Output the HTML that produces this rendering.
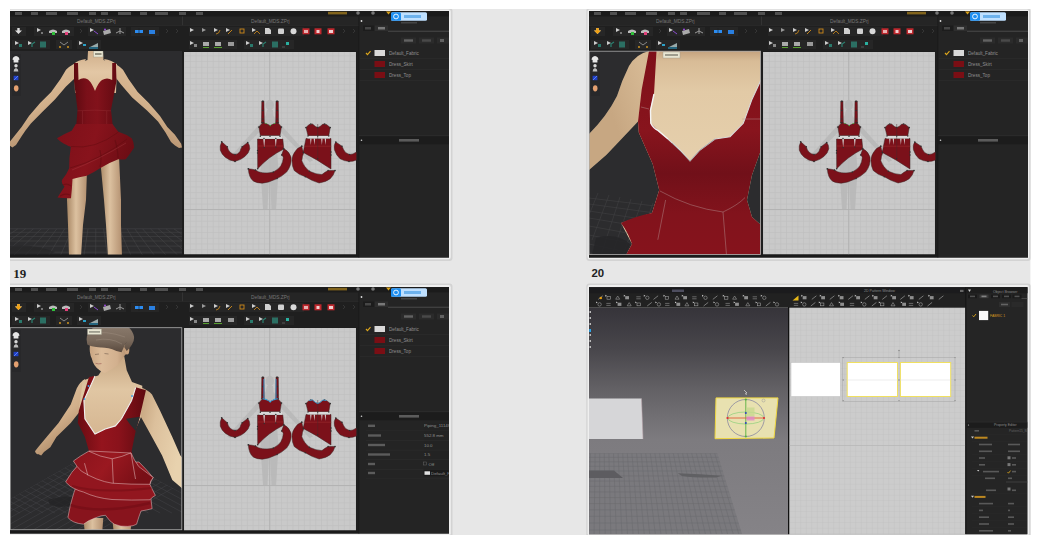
<!DOCTYPE html>
<html><head><meta charset="utf-8">
<style>
html,body{margin:0;padding:0;background:#fff;width:1041px;height:541px;overflow:hidden}
svg{display:block}
</style></head><body>
<svg width="1041" height="541" viewBox="0 0 1041 541" style='font-family:"Liberation Sans",sans-serif'>
<defs>
  <pattern id="grid" x="189.9" y="61.1" width="5.7" height="5.7" patternUnits="userSpaceOnUse">
    <rect width="5.7" height="5.7" fill="#c9c9c9"/>
    <path d="M0 0.35H5.7M0.35 0V5.7" stroke="#bdbdbd" stroke-width="0.7"/>
  </pattern>
  <linearGradient id="skinV" x1="0" y1="0" x2="1" y2="0">
    <stop offset="0" stop-color="#b89572"/><stop offset="0.5" stop-color="#e2c19c"/><stop offset="1" stop-color="#b89572"/>
  </linearGradient>
  <linearGradient id="redV" x1="0" y1="0" x2="1" y2="0">
    <stop offset="0" stop-color="#6e0c12"/><stop offset="0.45" stop-color="#9a141c"/><stop offset="1" stop-color="#6e0c12"/>
  </linearGradient>


  <linearGradient id="legG" x1="0" y1="0" x2="1" y2="0">
    <stop offset="0" stop-color="#a98865"/><stop offset="0.45" stop-color="#dcc1a0"/><stop offset="1" stop-color="#b39070"/>
  </linearGradient>
  <linearGradient id="armL" x1="0" y1="0" x2="0.5" y2="1">
    <stop offset="0" stop-color="#e6c9a6"/><stop offset="0.6" stop-color="#d2b08b"/><stop offset="1" stop-color="#a88462"/>
  </linearGradient>
  <linearGradient id="armR" x1="1" y1="0" x2="0.5" y2="1">
    <stop offset="0" stop-color="#e6c9a6"/><stop offset="0.6" stop-color="#d2b08b"/><stop offset="1" stop-color="#a88462"/>
  </linearGradient>
  <linearGradient id="chestG" x1="0" y1="0" x2="0" y2="1">
    <stop offset="0" stop-color="#cfae8a"/><stop offset="0.5" stop-color="#e3c7a5"/><stop offset="1" stop-color="#d8b994"/>
  </linearGradient>
  <linearGradient id="redBod" x1="0" y1="0" x2="1" y2="0">
    <stop offset="0" stop-color="#5e0a10"/><stop offset="0.3" stop-color="#7a1019"/><stop offset="0.55" stop-color="#82121b"/><stop offset="1" stop-color="#640b12"/>
  </linearGradient>
  <linearGradient id="redSk" x1="0" y1="0" x2="1" y2="0.3">
    <stop offset="0" stop-color="#7c1019"/><stop offset="0.5" stop-color="#88131c"/><stop offset="1" stop-color="#6c0d14"/>
  </linearGradient>
  <clipPath id="clipTL3d"><rect x="10" y="51" width="172" height="203.5"/></clipPath>

  <clipPath id="clipTR3d"><rect x="589" y="51" width="171.5" height="203.5"/></clipPath>
  <linearGradient id="armTR" x1="0" y1="0" x2="1" y2="-0.6">
    <stop offset="0" stop-color="#c7a782"/><stop offset="0.5" stop-color="#d6b994"/><stop offset="1" stop-color="#cdae88"/>
  </linearGradient>
  <clipPath id="clipTRfloor"><path d="M589 190L660 200L650 255H589Z"/></clipPath>
  <linearGradient id="skinTR" x1="0" y1="0" x2="0" y2="1">
    <stop offset="0" stop-color="#c4a27e"/><stop offset="0.05" stop-color="#d8bc97"/><stop offset="0.2" stop-color="#e2caa6"/><stop offset="0.6" stop-color="#e6d0ad"/><stop offset="1" stop-color="#e0c6a2"/>
  </linearGradient>
  <linearGradient id="redTR" x1="0" y1="0" x2="0" y2="1">
    <stop offset="0" stop-color="#7e1019"/><stop offset="0.39" stop-color="#88141d"/><stop offset="0.6" stop-color="#711019"/><stop offset="0.8" stop-color="#82131c"/><stop offset="1" stop-color="#86131c"/>
  </linearGradient>

  <clipPath id="clipBL3d"><rect x="10" y="327.5" width="172" height="202.5"/></clipPath>
  <clipPath id="clipBLfloor"><path d="M10 499L98.7 448.2L182 493V530H10Z"/></clipPath>
  <linearGradient id="armBLR" x1="0" y1="0" x2="1" y2="0.4">
    <stop offset="0" stop-color="#b8956f"/><stop offset="0.5" stop-color="#dcc09c"/><stop offset="1" stop-color="#e8d2ae"/>
  </linearGradient>
  <linearGradient id="chestBL" x1="0" y1="0" x2="0" y2="1">
    <stop offset="0" stop-color="#c7a682"/><stop offset="0.4" stop-color="#e0c6a3"/><stop offset="1" stop-color="#d4b48f"/>
  </linearGradient>
  <linearGradient id="faceG" x1="0" y1="0" x2="1" y2="0">
    <stop offset="0" stop-color="#c9a582"/><stop offset="0.3" stop-color="#dcbc9a"/><stop offset="0.7" stop-color="#d2b08e"/><stop offset="1" stop-color="#ae8a6a"/>
  </linearGradient>
  <linearGradient id="hairG" x1="0" y1="0" x2="0" y2="1">
    <stop offset="0" stop-color="#8e7e70"/><stop offset="0.6" stop-color="#7a6a5c"/><stop offset="1" stop-color="#5a4a3e"/>
  </linearGradient>

  <clipPath id="clipBRfloor"><path d="M589 453.2H717.3L742 534H589Z"/></clipPath>
  <linearGradient id="brGrad" x1="0" y1="0" x2="0" y2="1">
    <stop offset="0" stop-color="#36343a"/><stop offset="0.18" stop-color="#48464b"/><stop offset="0.36" stop-color="#636165"/><stop offset="0.58" stop-color="#7d7b7f"/><stop offset="1" stop-color="#858387"/>
  </linearGradient>
  <pattern id="gridBR" x="789.3" y="307.7" width="5.5" height="5.5" patternUnits="userSpaceOnUse">
    <rect width="5.5" height="5.5" fill="#cccccc"/>
    <path d="M0 0.25H5.5M0.25 0V5.5" stroke="#c0c0c0" stroke-width="0.5"/>
  </pattern>
  <g id="icons3d">
    <rect x="12" y="54" width="9" height="42" fill="#262628" opacity="0.6"/>
    <path d="M13.2 57.5q1.2-1.6 2.8-1.6t2.8 1.6l0.8 2-1.2 0.4v2.6h-4.8v-2.6l-1.2-0.4z" fill="#e6e6e6"/>
    <circle cx="16" cy="65.8" r="1.7" fill="#d8d8d8"/><path d="M13.6 71.5q0-3 2.4-3.6q2.4 0.6 2.4 3.6z" fill="#bdbdbd"/>
    <rect x="13.6" y="75.8" width="4.8" height="4.4" fill="#1f3fc8"/><path d="M14 80l4-4" stroke="#8ab0ff" stroke-width="0.6"/>
    <ellipse cx="16.2" cy="88.3" rx="2.3" ry="3.1" fill="#e4a070"/>
  </g>
  <clipPath id="clipBLpanel"><rect x="360" y="400" width="88.8" height="100"/></clipPath>
  <clipPath id="clipBRpanel"><rect x="966" y="280" width="61" height="260"/></clipPath>
  <linearGradient id="redBodBL" x1="0" y1="0" x2="1" y2="0">
    <stop offset="0" stop-color="#6a0c12"/><stop offset="0.35" stop-color="#94141d"/><stop offset="0.6" stop-color="#8a121b"/><stop offset="1" stop-color="#5e0a10"/>
  </linearGradient>
  <linearGradient id="redSkBL" x1="0" y1="0" x2="1" y2="0.3">
    <stop offset="0" stop-color="#8a131c"/><stop offset="0.5" stop-color="#9a1820"/><stop offset="1" stop-color="#780f16"/>
  </linearGradient>
  <!-- shared UI chrome (TL coordinates) -->
  <g id="chrome">
    <rect x="10" y="11" width="439" height="246.5" fill="#1e1e1e"/>
    <rect x="10" y="11" width="439" height="5.5" fill="#1b1b1b"/>
    <g fill="#9a9a9a" opacity="0.42">
      <rect x="15" y="12" width="7" height="3"/><rect x="31" y="12" width="7" height="3"/>
      <rect x="46" y="12" width="11" height="3"/><rect x="67" y="12" width="11" height="3"/>
      <rect x="89" y="12" width="7" height="3"/><rect x="101" y="12" width="7" height="3"/>
      <rect x="118" y="12" width="13" height="3"/><rect x="140" y="12" width="7" height="3"/>
      <rect x="155" y="12" width="13" height="3"/><rect x="179" y="12" width="7" height="3"/>
      <rect x="196" y="12" width="7" height="3"/>
    </g>
    <rect x="328" y="11.8" width="19" height="2.6" fill="#c8961e" opacity="0.6"/>
    <circle cx="358" cy="13" r="1.8" fill="#777"/><circle cx="373" cy="13" r="1.8" fill="#777"/>
    <path d="M386 11.5h5l-2.5 3z" fill="#d9a21c"/>
    <!-- title bar -->
    <rect x="10" y="16.5" width="349" height="9" fill="#252525"/>
    <rect x="10" y="25.2" width="349" height="0.6" fill="#333"/>
    <text x="77" y="22.6" font-size="4.8" fill="#8a8a8a" opacity="0.8">Default_MDS.ZPrj</text>
    <text x="251" y="22.6" font-size="4.8" fill="#8a8a8a" opacity="0.8">Default_MDS.ZPrj</text>
    <rect x="182" y="16.5" width="1" height="9" fill="#333"/>
    <!-- toolbars bg -->
    <rect x="10" y="25.8" width="349" height="25.5" fill="#1f1f1f"/>
    <!-- 3D viewport -->
    <rect x="10" y="51" width="172" height="203.5" fill="#2c2c2e"/>
    <!-- 2D window -->
    <rect x="184" y="52" width="172" height="202.5" fill="url(#grid)"/>
    <rect x="269.3" y="52" width="0.8" height="202.5" fill="#b0b0b0"/>
    <rect x="184" y="209" width="172" height="0.8" fill="#b0b0b0"/>
    <!-- status bar -->
    <rect x="10" y="254.5" width="349" height="3" fill="#1a1a1a"/>
    <!-- right panel -->
    <rect x="359" y="16.5" width="90" height="241" fill="#242424"/>
    <rect x="358.5" y="16.5" width="0.8" height="241" fill="#181818"/>
    <circle cx="361.5" cy="21" r="0.9" fill="#ddd"/>
    <rect x="363" y="25.5" width="11" height="5.5" fill="#1c1c1c"/>
    <rect x="375" y="25.5" width="13" height="5.5" fill="#2e2e2e"/>
    <rect x="378" y="27" width="7" height="2.5" fill="#aaa" opacity="0.6"/>
    <rect x="365" y="27" width="6" height="2.5" fill="#888" opacity="0.4"/>
    <rect x="388" y="30.8" width="61" height="0.7" fill="#5a5a5a"/>
    <rect x="401" y="37.5" width="15" height="6" fill="#2b2b2b"/>
    <rect x="419" y="37.5" width="15" height="6" fill="#2b2b2b"/>
    <rect x="437" y="37.5" width="12" height="6" fill="#2b2b2b"/>
    <rect x="404" y="39.3" width="9" height="2.4" fill="#999" opacity="0.5"/>
    <rect x="422" y="39.3" width="9" height="2.4" fill="#777" opacity="0.4"/>
    <rect x="440" y="39" width="4" height="3" fill="#999" opacity="0.5"/>
    <!-- fabric rows -->
    <path d="M366 53l1.5 1.6 3-3.4" stroke="#e0a81c" stroke-width="1.1" fill="none"/>
    <rect x="374.5" y="50" width="10.5" height="6" fill="#d9d9d9"/>
    <text x="389" y="55" font-size="4.6" fill="#a8a8a8" opacity="0.8">Default_Fabric</text>
    <rect x="374.5" y="61" width="10.5" height="6" fill="#7a0e14"/>
    <text x="389" y="66" font-size="4.6" fill="#a8a8a8" opacity="0.8">Dress_Skirt</text>
    <rect x="374.5" y="72" width="10.5" height="6" fill="#7a0e14"/>
    <text x="389" y="77" font-size="4.6" fill="#a8a8a8" opacity="0.8">Dress_Top</text>
    <rect x="360" y="58.5" width="89" height="0.5" fill="#2e2e2e"/>
    <rect x="360" y="69.5" width="89" height="0.5" fill="#2e2e2e"/>
    <rect x="360" y="80.5" width="89" height="0.5" fill="#2e2e2e"/>
    <!-- property editor header -->
    <rect x="359" y="135.5" width="90" height="0.8" fill="#303030"/>
    <rect x="359" y="136.3" width="90" height="8" fill="#1c1c1c"/>
    <circle cx="361.5" cy="140.3" r="0.8" fill="#ccc"/>
    <rect x="399" y="139" width="20" height="2.6" fill="#999" opacity="0.5"/>
    <!-- upload button -->
    <rect x="391" y="12.3" width="36" height="8.4" rx="1.5" fill="#bfe0ff"/>
    <rect x="391" y="12.3" width="10" height="8.4" rx="1.5" fill="#1f8ff0"/>
    <circle cx="396" cy="16.5" r="2.4" fill="none" stroke="#fff" stroke-width="0.9"/>
    <rect x="404" y="15" width="17" height="3" fill="#4a9ee6" opacity="0.7"/>
    <rect x="401" y="22" width="16" height="1.5" fill="#666" opacity="0.5"/>
    <!-- toolbar icons row1 -->
    <g id="tb1">
      <rect x="12" y="27" width="14" height="9" fill="#262626"/>
      <path d="M17.3 28h2.4v2.4h2.3l-3.5 3.6-3.5-3.6h2.3z" fill="#dcdcdc"/>
      <rect x="34" y="27" width="40" height="9" fill="#262626"/>
      <path d="M37 28l4 2-4 2z" fill="#ccc"/><rect x="41" y="32" width="2" height="2" fill="#777"/>
      <path d="M49 31q4-3 8 0v2h-8z" fill="#bbb"/><rect x="52" y="32" width="3" height="3" fill="#2fbf3a"/>
      <path d="M62 31q4-3 8 0v2h-8z" fill="#bbb"/><rect x="65" y="32" width="3" height="3" fill="#e0407a"/>
      <path d="M80 29l2 2-2 2" stroke="#444" stroke-width="0.6" fill="none"/>
      <rect x="88" y="27" width="38" height="9" fill="#262626"/>
      <path d="M90 28l4 2-4 2z" fill="#ccc"/><path d="M94 31l4 3" stroke="#8a4bd0" stroke-width="1"/>
      <path d="M103 31l7-2 1 4-7 2z" fill="#aaa"/><circle cx="105" cy="29.5" r="1" fill="#9b4be0"/>
      <path d="M120 28v6M116 33l4-2 4 2" stroke="#999" stroke-width="1" fill="none"/>
      <rect x="131" y="27" width="28" height="9" fill="#262626"/>
      <path d="M135 30h8v3h-8z" fill="#2c8cf0"/><path d="M139 28v7" stroke="#1e1e1e" stroke-width="0.6"/>
      <rect x="149" y="30" width="6" height="4" fill="#2a7fe0"/>
      <path d="M166 29l2 2-2 2M176 29l2 2-2 2" stroke="#444" stroke-width="0.6" fill="none"/>
    </g>
    <g id="tb2">
      <rect x="12" y="40" width="38" height="9" fill="#262626"/>
      <path d="M15 41l4 2-4 2z" fill="#ccc"/><rect x="19" y="44" width="3" height="3" fill="#2a7a6c"/>
      <path d="M28 41l4 2-4 2z" fill="#ccc"/><path d="M32 47v-3l3-2" stroke="#2a8070" stroke-width="1.2" fill="none"/>
      <rect x="40" y="41.5" width="6" height="6" fill="#2b6f63"/>
      <rect x="56" y="40" width="16" height="9" fill="#262626"/>
      <path d="M60 42l4 3 4-3" stroke="#888" stroke-width="1" fill="none"/><circle cx="60" cy="47" r="0.9" fill="#e0a020"/><circle cx="68" cy="47" r="0.9" fill="#e0a020"/>
      <rect x="77" y="40" width="24" height="9" fill="#262626"/>
      <path d="M79 41l4 2-4 2z" fill="#ccc"/><rect x="83" y="44" width="3" height="2" fill="#2aa0c8"/>
      <path d="M90 47l8-4v4z" fill="#9aa"/><path d="M89 48h9" stroke="#27a7d8" stroke-width="1"/>
    </g>
    <!-- 2D toolbar icons -->
    <g>
      <rect x="189" y="27" width="115" height="9" fill="#262626"/>
      <path d="M190 28l4 2-4 2z" fill="#ccc"/>
      <path d="M202 28l4 2-4 2z" fill="#999"/>
      <path d="M214 28l4 2-4 2z" fill="#ccc"/><path d="M216 34q3 0 4-4" stroke="#d08a1a" stroke-width="0.8" fill="none"/>
      <path d="M226 28l4 2-4 2z" fill="#ccc"/><path d="M228 34l4-4" stroke="#d08a1a" stroke-width="0.9" fill="none"/>
      <rect x="240" y="29" width="4" height="4" fill="none" stroke="#d08a1a" stroke-width="0.9"/>
      <path d="M252 28l4 2-4 2z" fill="#ccc"/><path d="M254 34l3-3 3 3" stroke="#d08a1a" stroke-width="0.8" fill="none"/>
      <path d="M265 28h4l2 2v4h-6z" fill="#cfcfcf"/>
      <rect x="278" y="28.5" width="6" height="5.5" rx="1" fill="#d0d0d0"/>
      <circle cx="293.5" cy="31.3" r="3" fill="#d8d8d8"/>
      <rect x="302.5" y="28.3" width="7" height="6" fill="#c0282e"/><rect x="304" y="30" width="4" height="3" fill="#e8b0b0"/>
      <rect x="314.5" y="28.3" width="7" height="6" fill="#c0282e"/><rect x="316.5" y="30" width="3" height="3" fill="#f0d0d0"/>
      <rect x="327.5" y="28.3" width="7" height="6" fill="#c0282e"/><rect x="329" y="30" width="4" height="3" fill="#f0d0d0"/>
      <path d="M343 29l2 2-2 2M353 29l2 2-2 2" stroke="#444" stroke-width="0.6" fill="none"/>
      <rect x="189" y="40" width="48" height="9" fill="#262626"/>
      <path d="M190 41l4 2-4 2z" fill="#ccc"/><rect x="194" y="44" width="3" height="3" fill="#888"/>
      <rect x="203" y="42" width="6" height="4" fill="#aaa"/><path d="M203 47.5h6" stroke="#5cb030" stroke-width="0.9"/>
      <rect x="215" y="42" width="6" height="4" fill="#aaa"/><path d="M214 47.5h8" stroke="#5cb030" stroke-width="0.9"/>
      <rect x="228" y="42" width="6" height="4" fill="#999"/>
      <rect x="244" y="40" width="50" height="9" fill="#262626"/>
      <path d="M246 41l4 2-4 2z" fill="#ccc"/><rect x="250" y="44" width="3" height="3" fill="#2a7a6c"/>
      <path d="M259 41l4 2-4 2z" fill="#ccc"/><path d="M263 47v-3l3-2" stroke="#2a8070" stroke-width="1.2" fill="none"/>
      <rect x="272" y="41.5" width="6" height="6" fill="#2b6f63"/>
      <rect x="286" y="42" width="3" height="3" fill="#2ab0a0"/><path d="M282 47h3" stroke="#777" stroke-width="0.6"/>
    </g>
    <use href="#icons3d"/>
  </g>

  <!-- 2D pattern pieces (TL coordinates) -->
  <g id="pieces">
    <g fill="#b9b9b9" opacity="0.9">
      <ellipse cx="269.8" cy="105" rx="4.2" ry="5.2"/>
      <path d="M267 110h6l0.5 6 4.5 6 1 14-2 14 1.5 20-0.5 8-2 31h-4.5l-1.5-30-0.5-8-0.5 8-1.5 30h-4.5l-2-31-0.5-8 1.5-20-2-14 1-14 4.5-6z"/>
      <path d="M261.5 122L227 160.5L230.5 162L263 128ZM278.5 122L313 160.5L309.5 162L277 128Z"/>
    </g>
    <g fill="#7b111a" stroke="#3a2222" stroke-width="0.5">
      <path d="M261.8 101H263.9L264.3 123H261.4Z"/>
      <path d="M276 101H278.3L278.6 123H275.7Z"/>
      <path d="M258.9 127L262.5 122.8L266 123.5L270.2 125.6L274.4 123.5L277.9 122.8L281.4 127L280 135.6H260.3Z"/>
      <path d="M257.5 139H282.8L283.8 149Q268 157 257.7 168.8Z"/>
      <path d="M283.8 148.8Q289 151 291 157Q292 165 286.6 172.1Q281 177 276.6 178.8Q268 183 262.2 183.2Q256 183 253.3 181Q249 178 248.3 168.8Q252 169 255.5 170Q258 172 262.2 172.7Q268 173.5 273.3 172.1Q279 169 281 165.5Q283 162 283.3 157.7Q283 156 281.6 155Z"/>
      <path d="M221.7 141.8Q219.5 146 220.3 150.2Q222 155 225.2 157.2Q230 161 235 161.4Q241 160 244.9 156.5Q249 153 249.8 148.8Q250 145 247.7 142.5L242.1 146.7Q240.5 149 240 151.6Q238 154.4 235 154.4Q232 154 230.2 152.3Q228 150 227.3 146.7Z"/>
      <path d="M306 127.5L309 124.5L312.5 124L315.5 126.5L317.7 127.5L320 126.5L323 124L326.5 124.5L330.2 127.5L328.8 135.8H308Z"/>
      <path d="M306 138.5H331L331 169Q318 160 303.2 152.4Z"/>
      <path d="M301.8 146.2Q297 148 295.5 151Q292 155 292 160.8Q292 166 294.2 170.5Q299 175 305.3 176.7Q312 181 319.1 183Q326 182 330.2 178.8Q334 175 335 170.5H328.1Q325 172 321.9 174.6Q315 174 309.4 171.2Q304 167 301.8 160.8Q302 156 303.9 152.4L302.5 149.7Z"/>
      <path d="M335.8 142Q333.5 145 334.4 149.7Q336 155 340 158.7Q344 161 349 161.5Q353 161.5 356.5 160V152Q353 154.5 349.6 154.5Q347 153.5 345.5 152.4Q343.5 150 342 146.2Z"/>
    </g>
    <g fill="#d9d9d9">
      <rect x="259.5" y="136" width="22.5" height="2.8"/>
      <rect x="307.5" y="136" width="22.5" height="2.5"/>
      <path d="M263.3 139H264.9L264.2 148ZM275 139H276.6L275.8 147.5Z"/>
      <path d="M310.2 138.5H311.5L310.8 145ZM313.7 138.5H315L314.3 145ZM321.2 138.5H322.5L321.9 145ZM324.7 138.5H326L325.4 145Z"/>
    </g>
    <path d="M257.5 146H283.5M303.5 146.2H331.5" stroke="#b03a3a" stroke-width="0.5" opacity="0.8"/>
    <path d="M317.7 124V158.7" stroke="#4a2a2a" stroke-width="0.45"/>
    <g fill="#2f2f2f">
      <circle cx="262.8" cy="101.3" r="0.85"/><circle cx="277.1" cy="101.3" r="0.85"/>
      <circle cx="262.8" cy="110.5" r="0.75"/><circle cx="277.1" cy="110.5" r="0.75"/>
      <circle cx="262.8" cy="119" r="0.75"/><circle cx="277.1" cy="119" r="0.75"/>
      <circle cx="258.9" cy="127" r="0.85"/><circle cx="281.4" cy="127" r="0.85"/>
      <circle cx="262.5" cy="122.8" r="0.75"/><circle cx="277.9" cy="122.8" r="0.75"/>
      <circle cx="260.3" cy="136.2" r="0.75"/><circle cx="264" cy="138.5" r="0.75"/><circle cx="270" cy="136.2" r="0.75"/><circle cx="275.8" cy="138.5" r="0.75"/><circle cx="280" cy="136.2" r="0.75"/>
      <circle cx="264.2" cy="147.5" r="0.7"/><circle cx="275.8" cy="147" r="0.7"/>
      <circle cx="257.5" cy="150.5" r="0.7"/><circle cx="257.5" cy="153" r="0.7"/>
      <circle cx="248.3" cy="168.8" r="0.85"/><circle cx="255.5" cy="170" r="0.75"/><circle cx="257.7" cy="168.8" r="0.75"/>
      <circle cx="273.3" cy="172.1" r="0.75"/><circle cx="277" cy="178.5" r="0.75"/><circle cx="283.8" cy="148.8" r="0.85"/><circle cx="281.6" cy="155" r="0.75"/>
      <circle cx="221.7" cy="141.8" r="0.85"/><circle cx="247.7" cy="142.5" r="0.85"/><circle cx="235" cy="161.4" r="0.8"/>
      <circle cx="242.1" cy="146.7" r="0.75"/><circle cx="227.3" cy="146.7" r="0.75"/><circle cx="235" cy="154.4" r="0.75"/>
      <circle cx="306" cy="127.5" r="0.85"/><circle cx="330.2" cy="127.5" r="0.85"/>
      <circle cx="310.8" cy="124" r="0.75"/><circle cx="324.7" cy="124" r="0.75"/><circle cx="317.7" cy="127.5" r="0.7"/>
      <circle cx="308" cy="136" r="0.7"/><circle cx="317.7" cy="136" r="0.7"/><circle cx="328.8" cy="136" r="0.7"/>
      <circle cx="303.2" cy="152.4" r="0.75"/><circle cx="317.7" cy="158.7" r="0.75"/><circle cx="331" cy="152" r="0.7"/><circle cx="331" cy="155" r="0.7"/>
      <circle cx="301.8" cy="146.2" r="0.85"/><circle cx="335" cy="170.5" r="0.85"/><circle cx="328.1" cy="170.5" r="0.75"/>
      <circle cx="309.4" cy="171.2" r="0.75"/><circle cx="305.3" cy="176.7" r="0.75"/>
      <circle cx="335.8" cy="142" r="0.85"/><circle cx="342" cy="146.2" r="0.75"/><circle cx="349" cy="161.5" r="0.8"/><circle cx="349.6" cy="154.5" r="0.75"/>
    </g>
    <g fill="#3cc83c"><circle cx="266" cy="123.5" r="0.6"/><circle cx="270.2" cy="125.6" r="0.7"/><circle cx="274.4" cy="123.5" r="0.6"/></g>
  </g>
</defs>

<!-- page background -->
<rect x="10" y="9" width="1020.5" height="526" fill="#e7e7e7"/>

<!-- frames -->
<g>
  <rect x="7" y="8" width="445.5" height="253" rx="3" fill="#d3d3d3"/>
  <rect x="8.5" y="9.5" width="442.3" height="249.8" rx="2.2" fill="#efefef"/>
  <rect x="586.3" y="8" width="444.5" height="253" rx="3" fill="#d3d3d3"/>
  <rect x="587.6" y="9.5" width="441.5" height="249.8" rx="2.2" fill="#efefef"/>
  <rect x="7" y="283.6" width="445.5" height="254" rx="3" fill="#d3d3d3"/>
  <rect x="8.5" y="285.1" width="442.3" height="250.3" rx="2.2" fill="#efefef"/>
  <rect x="586.3" y="283.6" width="444.5" height="254" rx="3" fill="#d3d3d3"/>
  <rect x="587.6" y="285.1" width="441.5" height="250.3" rx="2.2" fill="#efefef"/>
</g>
<!-- TL -->
<use href="#chrome"/>
<use href="#pieces"/>

<!-- TL figure -->
<g id="figTL" clip-path="url(#clipTL3d)">
  <!-- floor grid -->
  <g stroke="#48484b" stroke-width="0.5" fill="none"><path d="M10 228.8H182M10 232.3H182M10 236.6H182M10 241H182M10 246.1H182M10 252.2H182M-5.6 228.8L-56.4 255M2.2 228.8L-44.7 255M10.0 228.8L-33.0 255M17.8 228.8L-21.3 255M25.6 228.8L-9.6 255M33.4 228.8L2.1 255M41.2 228.8L13.8 255M49.0 228.8L25.5 255M56.8 228.8L37.2 255M64.6 228.8L48.9 255M72.4 228.8L60.6 255M80.2 228.8L72.3 255M88.0 228.8L84.0 255M95.8 228.8L95.7 255M103.6 228.8L107.4 255M111.4 228.8L119.1 255M119.2 228.8L130.8 255M127.0 228.8L142.5 255M134.8 228.8L154.2 255M142.6 228.8L165.9 255M150.4 228.8L177.6 255M158.2 228.8L189.3 255M166.0 228.8L201.0 255M173.8 228.8L212.7 255M181.6 228.8L224.4 255M189.4 228.8L236.1 255M197.2 228.8L247.8 255"/></g>
  <path d="M10 246Q30 243 55 252L50 254.5H10Z" fill="#262628" opacity="0.7"/>
  <!-- legs -->
  <path d="M68 172L87 170L86 200L83 225L81 257H69L68 225L67 200Z" fill="url(#legG)"/>
  <path d="M100 158L119 156L121 200L121 225L122 257H108L106 225L104 200Z" fill="url(#legG)"/>
  <!-- arms -->
  <path d="M86 59Q78 60 73.4 64.2Q69 66.5 66 69.8L60.5 79L51.2 92L40.1 103L29 116L21.6 127L14.2 136.3L9.6 141.9L9.6 145.6L12.4 147.4L16 145L21.6 136.3L25.3 130.8L30.9 123.4L42 112.3L54.9 99.4L66 86.4L74 79Z" fill="url(#armL)"/>
  <path d="M104 59Q112 60 117.4 65.2Q120.5 67 123 69.8L128.5 79L137.7 92L148.8 103L160 116L167.3 127L174.7 134.5L181.2 143.7L182 147.4L179 148L175 145.5L171 142L165.5 132.6L158 121.5L147 110.5L132.2 97.5L121 84.6L116 78Z" fill="url(#armR)"/>
  <!-- neck & chest -->
  <path d="M88 51H103L103.5 60Q110 62 117 64L116 93H75L74 64Q81 62 87.5 60Z" fill="url(#chestG)"/>
  <!-- bodice -->
  <path d="M74 63H78L78.5 80Q83 77 88 79.5Q92 83 95 91Q98 83 102 80Q107 77 112.2 80L112.2 63H116L116.5 81L111 110L113 128H76L77.5 110L74 81Z" fill="url(#redBod)"/>
  <path d="M77.5 110.8Q95 109.5 111 110.8M82.5 111V130M106.7 111V130" stroke="#b04a50" stroke-width="0.4" fill="none" opacity="0.55"/>
  <!-- skirt -->
  <path d="M75.8 124L112.5 124Q116 129 118.3 131.7Q126 134 131.7 138.3Q134 142 134.2 147.5Q130 154 125.8 159.2Q122 160 118.3 159.2Q108 163 100 168.3Q93 173 86.7 175.8Q79 177 72.5 179Q72 189 71 198.3Q64 198.5 57.5 197.5Q61 192 64.5 186.7Q61 183 62 180Q67 174 69.2 168.3Q69 158 70.8 146.7Q68 146 66.7 145Q60 142 57 138.3Q64 134 71.7 130.8Z" fill="url(#redSk)"/>
  <path d="M71 146.5Q95 150 118.5 132M70 168Q100 160 127 139" stroke="#5f0a0f" stroke-width="0.8" fill="none" opacity="0.6"/><path d="M63 185Q67 183 71 186M60 196Q65 193 70 195M100 150Q102 160 100 167M115 140Q118 150 118 158" stroke="#5a0a0f" stroke-width="1.2" fill="none" opacity="0.45"/>
  <path d="M72 170Q98 160 126 143" stroke="#c05a5e" stroke-width="0.4" fill="none" opacity="0.6"/>
  <!-- tag -->
  <rect x="93.6" y="51" width="9.4" height="6" fill="#e9e6d2" stroke="#9a9a8a" stroke-width="0.4"/>
  <rect x="95" y="53" width="6.5" height="2" fill="#6d6d60" opacity="0.7"/>
</g>
<!-- TR -->
<use href="#chrome" x="579"/>
<use href="#pieces" x="579"/>

<!-- TR figure -->
<g clip-path="url(#clipTR3d)">
  <rect x="589" y="51" width="172" height="204" fill="url(#skinTR)"/>
  <!-- arm shading -->
  <path d="M589 134Q607 116 617 96Q622 80 629 66Q636 54 649 51H660L641.6 90L638 121.4L625 135.3L606.5 154.7L589 170Z" fill="url(#armTR)"/>
  <path d="M589 51H649Q636 54 629 66Q622 80 617 96Q607 116 589 134Z" fill="#2c2c2e"/>
  <path d="M589 170L606.5 154.7L625 135.3L638 121.4L638.8 132.5L645.3 147.3L652.7 164L659.2 190L652 213L621 223L632 244L626 255H589Z" fill="#2c2c2e"/>
  <!-- floor grid -->
  <g stroke="#444447" stroke-width="0.5" fill="none" clip-path="url(#clipTRfloor)">
    <path d="M589 198L655 206M589 204L655 213M589 211L655 221M589 218L655 229M589 226L655 238M589 235L655 248M589 244L655 258M589 253L640 260"/>
    <path d="M598 193L589 215M609 195L592 240M620 197L600 258M631 199L611 258M642 201L622 258M653 203L634 258"/>
  </g>
  <path d="M596 238Q616 232 630 244L626 255H592Z" fill="#262628" opacity="0.9"/>
  <!-- dress -->
  <path d="M649 51H656.5L654 94L650 110.3L650.8 123.3L658.2 130.7L668 139L680 150L690 161L700 150L715 139L730 136.7L743.3 123.3L751.7 100L761 80V150L752 175L747 200L752 217L761 225V255H626L632 244Q628 232 621 223Q636 216 652 213L659.2 190L652.7 164L645.3 147.3L638.8 132.5L638 121.4L641.6 90Z" fill="url(#redTR)"/>
  <path d="M761 150L752 175L747 200L752 217L761 225Z" fill="#2c2c2e"/>
  <!-- piping -->
  <path d="M654 94L650.5 110.3L650.8 123.3Q653 128 658.2 130.7L668 139" stroke="#f4f4f4" stroke-width="1.4" fill="none"/>
  <path d="M668 139L680 150L690 161L700 150L715 139L730 136.7L743.3 123.3L751.7 100L761 80" stroke="#d8d8d8" stroke-width="1.1" fill="none"/>
  <path d="M672 143L690 161L700 150L715 139" stroke="#777" stroke-width="0.7" fill="none" opacity="0.7"/>
  <!-- seams -->
  <path d="M660 191Q690 208 723 212Q738 205 745 197.6M665.6 200L657.8 239.8M723 212L726.5 255M641 107L649 109M742 119H761" stroke="#b89a9a" stroke-width="0.55" fill="none" opacity="0.8"/>
  <!-- tag -->
  <rect x="663" y="52" width="17" height="6" fill="#e9e6d2" stroke="#9a9a8a" stroke-width="0.4"/>
  <rect x="665" y="54" width="13" height="2" fill="#6d6d60" opacity="0.6"/>
</g>
<rect x="589.2" y="51.2" width="171.3" height="203.3" fill="none" stroke="#a8a8a8" stroke-width="0.8"/>
<use href="#icons3d" x="579"/>
<!-- BL -->
<use href="#chrome" y="276"/>
<use href="#pieces" y="276"/>




<!-- BL blue selection highlights on 2D pieces -->
<g stroke="#3aa8e8" stroke-width="0.8" fill="none">
  <path d="M263.9 379V399M276 379V399"/>
  <path d="M262.5 398.8L266 399.5L270.2 401.6L274.4 399.5L277.9 398.8"/>
  <path d="M309 400.5L312.5 400L315.5 402.5L317.7 403.5L320 402.5L323 400L326.5 400.5"/>
</g>
<g fill="#3aa8e8"><circle cx="270.2" cy="401.6" r="0.9"/><circle cx="266" cy="399.5" r="0.7"/><circle cx="274.4" cy="399.5" r="0.7"/></g>
<!-- BL property rows -->
<g>
  <g fill="#2e2e2e">
    <rect x="366" y="430.6" width="83" height="0.5"/><rect x="366" y="440.2" width="83" height="0.5"/><rect x="366" y="449.8" width="83" height="0.5"/>
    <rect x="366" y="459.4" width="83" height="0.5"/><rect x="366" y="469" width="83" height="0.5"/><rect x="366" y="478.6" width="83" height="0.5"/>
  </g>
  <g fill="#a0a0a0" opacity="0.45">
    <rect x="368" y="424.6" width="7" height="2.4"/>
    <rect x="368" y="434.3" width="13" height="2.4"/>
    <rect x="368" y="443.8" width="17" height="2.4"/>
    <rect x="368" y="453.3" width="22" height="2.4"/>
    <rect x="368" y="462.8" width="7" height="2.4"/>
    <rect x="368" y="471.8" width="7" height="2.4"/>
  </g>
  <rect x="423.5" y="462" width="3" height="3" fill="none" stroke="#666" stroke-width="0.5"/>
  <rect x="423.5" y="469.8" width="25.5" height="6.5" fill="#1c1c1c"/>
  <rect x="424.5" y="471.3" width="5.5" height="3.5" fill="#e0e0e0"/>
  
</g>
<g font-size="4.4" fill="#a0a0a0" opacity="0.85" clip-path="url(#clipBLpanel)">
  <text x="424" y="427.3">Piping_11148</text>
  <text x="424" y="437">552.8 mm</text>
  <text x="424" y="446.5">10.0</text>
  <text x="424" y="456">1.5</text>
  <text x="428.5" y="465.5">Off</text>
  <text x="431" y="474.5">Default_Fabric</text>
</g>
<!-- BL figure -->
<g clip-path="url(#clipBL3d)">
  <!-- floor grid -->
  <g stroke="#454548" stroke-width="0.5" fill="none" clip-path="url(#clipBLfloor)"><path d="M0 504.7L200 390.7M0 511.0L200 397.0M0 517.3L200 403.3M0 523.6L200 409.6M0 529.9L200 415.9M0 536.2L200 422.2M0 542.5L200 428.5M0 548.8L200 434.8M0 555.1L200 441.1M0 561.4L200 447.4M0 567.7L200 453.7M0 574.0L200 460.0M0 580.3L200 466.3M0 586.6L200 472.6M-255.3 383.4L-15.3 513.0M-243.6 383.4L-3.6 513.0M-231.9 383.4L8.1 513.0M-220.2 383.4L19.8 513.0M-208.5 383.4L31.5 513.0M-196.8 383.4L43.2 513.0M-185.1 383.4L54.9 513.0M-173.4 383.4L66.6 513.0M-161.7 383.4L78.3 513.0M-150.0 383.4L90.0 513.0M-138.3 383.4L101.7 513.0M-126.6 383.4L113.4 513.0M-114.9 383.4L125.1 513.0M-103.2 383.4L136.8 513.0M-91.5 383.4L148.5 513.0M-79.8 383.4L160.2 513.0M-68.1 383.4L171.9 513.0M-56.4 383.4L183.6 513.0M-44.7 383.4L195.3 513.0M-33.0 383.4L207.0 513.0M-21.3 383.4L218.7 513.0M-9.6 383.4L230.4 513.0M2.1 383.4L242.1 513.0M13.8 383.4L253.8 513.0M25.5 383.4L265.5 513.0M37.2 383.4L277.2 513.0M48.9 383.4L288.9 513.0M60.6 383.4L300.6 513.0M72.3 383.4L312.3 513.0M84.0 383.4L324.0 513.0M95.7 383.4L335.7 513.0M107.4 383.4L347.4 513.0M119.1 383.4L359.1 513.0M130.8 383.4L370.8 513.0"/></g>
  <path d="M48 500Q65 494 78 498L74 506Q58 508 50 505Z" fill="#242426" opacity="0.8"/>
  <!-- legs -->
  <path d="M83.4 518H103.3L102 535H85Z" fill="url(#legG)"/>
  <path d="M112.2 518H132.1L130 535H114Z" fill="url(#legG)"/>
  <!-- arms -->
  <path d="M84.9 379.1Q80 382 76.8 388.3L70.7 404.6L58.5 422.9L48.3 435L38.1 447.3L35 451.3Q36 455 38 454L41.2 455.4L44 452L50.3 447.3L56.4 437L70.7 422.9L78.8 412.7L86 395Z" fill="url(#armL)"/>
  <path d="M140.8 387.3Q148 390 152 394.4L160.1 410.7L172.3 437L180.4 455.4L184 460V490L172.3 480L162.1 455.4L152 437L140.8 416.8L132 400Z" fill="url(#armBLR)"/>
  <!-- neck + chest -->
  <path d="M100.9 370L124.2 356L126.7 370.3L132 381.9Q138 384 142.3 385.8L141 417L131 440L96 440L78.8 411L82.8 380.6Q92 377 98.3 375.5L100.9 371.6Z" fill="url(#chestBL)"/>
  <!-- face -->
  <path d="M89.9 345Q89 353 91.8 358.6Q92.5 362 94.4 365.1Q97 369 99.6 370.3Q102 372.5 104.8 372.9Q112 370 117.7 365.1Q121 361 124.2 356L129 351L127 345Q110 338 89.9 345Z" fill="url(#faceG)"/>
  <ellipse cx="127" cy="350" rx="2.3" ry="4.5" fill="#c9a27e"/>
  <path d="M95 354.5L99 354M104.5 353.5L108.5 354" stroke="#4a3a30" stroke-width="0.7" opacity="0.6"/>
  <path d="M95.5 363.3Q98.5 364.3 101.5 363.6" stroke="#9a5850" stroke-width="1" opacity="0.6" fill="none"/>
  <!-- hair -->
  <path d="M86.6 339.2Q87 326 109 322Q131 322 134 336.6Q134.5 341 132 344.4Q130 348 126.7 350.9L124.2 347L126.7 341.8Q124 346 121.6 352.2Q118 351 116.4 350.9Q112 349 108.6 348.3Q104 347.5 100.9 347.6Q96 347 91.8 346.3Q89 345.5 87.3 344.4Z" fill="url(#hairG)"/>
  <path d="M92 334Q105 330 125 337M96 340Q110 337 122 344" stroke="#a8988a" stroke-width="0.7" fill="none" opacity="0.5"/>
  <!-- bodice -->
  <path d="M89 377.1L95 376.1L83.9 400.5L84.9 418.8L95 434L105.2 429L115.4 425.9L121.5 418.8L131.6 400.5L135.7 387.3L145.9 390.3L139.8 416.8L135.7 431L131.6 451.3L133.7 459.4H89.5L89 451.3L84.9 437L77.8 422.9L78.8 410.7Z" fill="url(#redBodBL)"/>
  <path d="M126 418.8L139.8 416.8L135.7 431Q130 425 126 418.8Z" fill="#2c2c2e"/>
  <!-- piping -->
  <path d="M95 376.1L83.9 400.5L84.9 418.8L95 434L105.2 429L115.4 425.9L121.5 418.8L131.6 400.5L135.7 387.3" stroke="#f0f0f0" stroke-width="1.1" fill="none"/>
  <g fill="#3aa0e8"><circle cx="88.5" cy="386" r="0.9"/><circle cx="84.5" cy="399" r="0.9"/><circle cx="132" cy="396" r="0.9"/></g>
  <!-- skirt -->
  <path d="M84 468Q72 492 67.9 517.5Q72 523 83.4 524.2Q89 520 95 518Q102 515 105.5 515.3Q110 522 114.4 524.2Q121 527 127.7 526.4Q134 526 136.6 524.2Q139 516 141 511Q147 510 152.1 508.7Q151 490 141 468Z" fill="#88141d" stroke="#e8caca" stroke-width="0.5"/>
  <path d="M80 463Q71 472 65.6 482Q70 487 74.5 488.7Q79 491 83.4 492Q96 498 112 499.5Q132 500.5 149.9 499.8Q152 497 155.4 495.4Q152 489 149.9 484.3Q151 480 153.2 477.6Q146 469 139 462Z" fill="#92161f" stroke="#e8caca" stroke-width="0.5"/>
  <path d="M89 451Q80 456 73.4 461Q77 467 81.2 471Q97 481 112.2 483.2Q131 484.5 149.9 484.3Q150 481 153.2 477.6Q146 472 138.8 466.6Q134 460 131 453Z" fill="url(#redSkBL)" stroke="#e8caca" stroke-width="0.5"/>
  <path d="M89 451.3Q100 457 112.2 458.8Q122 457 131 452.8M112.2 458.8L113.3 483.2M84.5 463.2L87.8 475.4M131 453.3L135.5 479" stroke="#e8caca" stroke-width="0.5" fill="none"/>
  <path d="M70 505Q100 515 150 503" stroke="#5a080e" stroke-width="2.5" fill="none" opacity="0.3"/>
  <path d="M72 486Q100 494 152 488" stroke="#5a080e" stroke-width="2" fill="none" opacity="0.3"/>
  <!-- tag -->
  <rect x="87.5" y="329" width="14" height="5.5" fill="#e9e6d2" stroke="#9a9a8a" stroke-width="0.4"/>
  <rect x="89" y="331" width="11" height="1.8" fill="#6d6d60" opacity="0.6"/>
</g>
<rect x="10.3" y="327.7" width="171.5" height="202" fill="none" stroke="#a8a8a8" stroke-width="0.8"/>

<!-- BR screenshot -->
<g>
  <rect x="589" y="287.2" width="438.3" height="247" fill="#1f1f1f"/>
  <rect x="589" y="287.2" width="438.3" height="6" fill="#1b1b1d"/>
  <rect x="672" y="289.5" width="12" height="2.5" fill="#6f6f8a" opacity="0.6"/>
  <text x="864" y="292" font-size="3.6" fill="#8a8a8a">2D Pattern Window</text>
  
  <rect x="589" y="293.2" width="377" height="14" fill="#212121"/>
  <g>
    <path d="M598.2 299.4L602.8 295.8" stroke="#b0b0b0" stroke-width="0.6"/>
    <path d="M605.3 294.8l1.6 1-1.6 0.9z" fill="#d0d0d0"/><rect x="607.0" y="296.4" width="3.4" height="2.8" fill="none" stroke="#a8a8a8" stroke-width="0.55"/>
    <path d="M615.7 299.2l2-3.2 2 3.2z" fill="none" stroke="#a8a8a8" stroke-width="0.55"/>
    <path d="M623.8 294.8l1.6 1-1.6 0.9z" fill="#d0d0d0"/><rect x="625.2" y="296.1" width="3.8" height="3.2" fill="#8e8e8e"/>
    <path d="M636.3 296.8h4.4M636.3 298.8h4.4" stroke="#a0a0a0" stroke-width="0.55"/>
    <path d="M643.8 294.8l1.6 1-1.6 0.9z" fill="#d0d0d0"/><circle cx="647.3" cy="297.8" r="1.7" fill="none" stroke="#a8a8a8" stroke-width="0.55"/>
    <path d="M653.5 299.4L658.1 295.8" stroke="#b0b0b0" stroke-width="0.6"/>
    <path d="M663.5 294.8l1.6 1-1.6 0.9z" fill="#d0d0d0"/><rect x="665.2" y="296.4" width="3.4" height="2.8" fill="none" stroke="#a8a8a8" stroke-width="0.55"/>
    <path d="M675.0 299.2l2-3.2 2 3.2z" fill="none" stroke="#a8a8a8" stroke-width="0.55"/>
    <path d="M681.8 294.8l1.6 1-1.6 0.9z" fill="#d0d0d0"/><rect x="683.2" y="296.1" width="3.8" height="3.2" fill="#8e8e8e"/>
    <path d="M692.2 296.8h4.4M692.2 298.8h4.4" stroke="#a0a0a0" stroke-width="0.55"/>
    <path d="M702.0 294.8l1.6 1-1.6 0.9z" fill="#d0d0d0"/><circle cx="705.5" cy="297.8" r="1.7" fill="none" stroke="#a8a8a8" stroke-width="0.55"/>
    <path d="M712.8 299.4L717.4 295.8" stroke="#b0b0b0" stroke-width="0.6"/>
    <path d="M722.8 294.8l1.6 1-1.6 0.9z" fill="#d0d0d0"/><rect x="724.5" y="296.4" width="3.4" height="2.8" fill="none" stroke="#a8a8a8" stroke-width="0.55"/>
    <path d="M732.6 299.2l2-3.2 2 3.2z" fill="none" stroke="#a8a8a8" stroke-width="0.55"/>
    <path d="M742.8 294.8l1.6 1-1.6 0.9z" fill="#d0d0d0"/><rect x="744.2" y="296.1" width="3.8" height="3.2" fill="#8e8e8e"/>
    <path d="M752.6 296.8h4.4M752.6 298.8h4.4" stroke="#a0a0a0" stroke-width="0.55"/>
    <path d="M760.8 294.8l1.6 1-1.6 0.9z" fill="#d0d0d0"/><circle cx="764.3" cy="297.8" r="1.7" fill="none" stroke="#a8a8a8" stroke-width="0.55"/>
    <path d="M596.1 301.4l1.6 1-1.6 0.9z" fill="#d0d0d0"/><circle cx="599.6" cy="304.4" r="1.7" fill="none" stroke="#a8a8a8" stroke-width="0.55"/>
    <path d="M606.3 303.4h4.4M606.3 305.4h4.4" stroke="#a0a0a0" stroke-width="0.55"/>
    <path d="M616.2 301.4l1.6 1-1.6 0.9z" fill="#d0d0d0"/><rect x="617.6" y="302.7" width="3.8" height="3.2" fill="#8e8e8e"/>
    <path d="M627.2 305.8l2-3.2 2 3.2z" fill="none" stroke="#a8a8a8" stroke-width="0.55"/>
    <path d="M635.3 301.4l1.6 1-1.6 0.9z" fill="#d0d0d0"/><rect x="637.0" y="303.0" width="3.4" height="2.8" fill="none" stroke="#a8a8a8" stroke-width="0.55"/>
    <path d="M647.2 306.0L651.8 302.4" stroke="#b0b0b0" stroke-width="0.6"/>
    <path d="M655.4 301.4l1.6 1-1.6 0.9z" fill="#d0d0d0"/><circle cx="658.9" cy="304.4" r="1.7" fill="none" stroke="#a8a8a8" stroke-width="0.55"/>
    <path d="M665.1 303.4h4.4M665.1 305.4h4.4" stroke="#a0a0a0" stroke-width="0.55"/>
    <path d="M675.0 301.4l1.6 1-1.6 0.9z" fill="#d0d0d0"/><rect x="676.4" y="302.7" width="3.8" height="3.2" fill="#8e8e8e"/>
    <path d="M684.9 305.8l2-3.2 2 3.2z" fill="none" stroke="#a8a8a8" stroke-width="0.55"/>
    <path d="M692.8 301.4l1.6 1-1.6 0.9z" fill="#d0d0d0"/><rect x="694.5" y="303.0" width="3.4" height="2.8" fill="none" stroke="#a8a8a8" stroke-width="0.55"/>
    <path d="M703.6 306.0L708.2 302.4" stroke="#b0b0b0" stroke-width="0.6"/>
    <path d="M713.5 301.4l1.6 1-1.6 0.9z" fill="#d0d0d0"/><circle cx="717.0" cy="304.4" r="1.7" fill="none" stroke="#a8a8a8" stroke-width="0.55"/>
    <path d="M725.5 303.4h4.4M725.5 305.4h4.4" stroke="#a0a0a0" stroke-width="0.55"/>
    <path d="M733.7 301.4l1.6 1-1.6 0.9z" fill="#d0d0d0"/><rect x="735.1" y="302.7" width="3.8" height="3.2" fill="#8e8e8e"/>
    <path d="M745.8 305.8l2-3.2 2 3.2z" fill="none" stroke="#a8a8a8" stroke-width="0.55"/>
    <path d="M755.6 301.4l1.6 1-1.6 0.9z" fill="#d0d0d0"/><rect x="757.3" y="303.0" width="3.4" height="2.8" fill="none" stroke="#a8a8a8" stroke-width="0.55"/>
    <path d="M765.8 306.0L770.4 302.4" stroke="#b0b0b0" stroke-width="0.6"/>
    <path d="M773.5 301.4l1.6 1-1.6 0.9z" fill="#d0d0d0"/><circle cx="777.0" cy="304.4" r="1.7" fill="none" stroke="#a8a8a8" stroke-width="0.55"/>
    <path d="M801.3 294.8l1.6 1-1.6 0.9z" fill="#d0d0d0"/><rect x="802.7" y="296.1" width="3.8" height="3.2" fill="#8e8e8e"/>
    <path d="M811.8 299.4L816.4 295.8" stroke="#b0b0b0" stroke-width="0.6"/>
    <path d="M819.8 294.8l1.6 1-1.6 0.9z" fill="#d0d0d0"/><rect x="821.2" y="296.1" width="3.8" height="3.2" fill="#8e8e8e"/>
    <path d="M829.8 299.4L834.4 295.8" stroke="#b0b0b0" stroke-width="0.6"/>
    <path d="M838.3 294.8l1.6 1-1.6 0.9z" fill="#d0d0d0"/><rect x="839.7" y="296.1" width="3.8" height="3.2" fill="#8e8e8e"/>
    <path d="M848.3 299.4L852.9 295.8" stroke="#b0b0b0" stroke-width="0.6"/>
    <path d="M854.8 294.8l1.6 1-1.6 0.9z" fill="#d0d0d0"/><rect x="856.2" y="296.1" width="3.8" height="3.2" fill="#8e8e8e"/>
    <path d="M864.8 299.4L869.4 295.8" stroke="#b0b0b0" stroke-width="0.6"/>
    <path d="M872.3 294.8l1.6 1-1.6 0.9z" fill="#d0d0d0"/><rect x="873.7" y="296.1" width="3.8" height="3.2" fill="#8e8e8e"/>
    <path d="M882.3 299.4L886.9 295.8" stroke="#b0b0b0" stroke-width="0.6"/>
    <path d="M890.8 294.8l1.6 1-1.6 0.9z" fill="#d0d0d0"/><rect x="892.2" y="296.1" width="3.8" height="3.2" fill="#8e8e8e"/>
    <path d="M900.3 299.4L904.9 295.8" stroke="#b0b0b0" stroke-width="0.6"/>
    <path d="M908.4 294.8l1.6 1-1.6 0.9z" fill="#d0d0d0"/><rect x="909.8" y="296.1" width="3.8" height="3.2" fill="#8e8e8e"/>
    <path d="M918.8 299.4L923.4 295.8" stroke="#b0b0b0" stroke-width="0.6"/>
    <path d="M928.4 294.8l1.6 1-1.6 0.9z" fill="#d0d0d0"/><rect x="929.8" y="296.1" width="3.8" height="3.2" fill="#8e8e8e"/>
    <path d="M938.8 299.4L943.4 295.8" stroke="#b0b0b0" stroke-width="0.6"/>
    <path d="M793.8 303.4h4.4M793.8 305.4h4.4" stroke="#a0a0a0" stroke-width="0.55"/>
    <path d="M800.8 301.4l1.6 1-1.6 0.9z" fill="#d0d0d0"/><circle cx="804.3" cy="304.4" r="1.7" fill="none" stroke="#a8a8a8" stroke-width="0.55"/>
    <path d="M810.8 306.0L815.4 302.4" stroke="#b0b0b0" stroke-width="0.6"/>
    <path d="M818.8 301.4l1.6 1-1.6 0.9z" fill="#d0d0d0"/><rect x="820.5" y="303.0" width="3.4" height="2.8" fill="none" stroke="#a8a8a8" stroke-width="0.55"/>
    <path d="M829.5 305.8l2-3.2 2 3.2z" fill="none" stroke="#a8a8a8" stroke-width="0.55"/>
    <path d="M838.8 301.4l1.6 1-1.6 0.9z" fill="#d0d0d0"/><rect x="840.2" y="302.7" width="3.8" height="3.2" fill="#8e8e8e"/>
    <path d="M849.8 303.4h4.4M849.8 305.4h4.4" stroke="#a0a0a0" stroke-width="0.55"/>
    <path d="M860.8 301.4l1.6 1-1.6 0.9z" fill="#d0d0d0"/><circle cx="864.3" cy="304.4" r="1.7" fill="none" stroke="#a8a8a8" stroke-width="0.55"/>
    <path d="M871.8 306.0L876.4 302.4" stroke="#b0b0b0" stroke-width="0.6"/>
    <path d="M878.8 301.4l1.6 1-1.6 0.9z" fill="#d0d0d0"/><rect x="880.5" y="303.0" width="3.4" height="2.8" fill="none" stroke="#a8a8a8" stroke-width="0.55"/>
    <path d="M891.0 305.8l2-3.2 2 3.2z" fill="none" stroke="#a8a8a8" stroke-width="0.55"/>
    <path d="M900.8 301.4l1.6 1-1.6 0.9z" fill="#d0d0d0"/><rect x="902.2" y="302.7" width="3.8" height="3.2" fill="#8e8e8e"/>
    <path d="M908.8 303.4h4.4M908.8 305.4h4.4" stroke="#a0a0a0" stroke-width="0.55"/>
    <path d="M917.2 301.4l1.6 1-1.6 0.9z" fill="#d0d0d0"/><circle cx="920.7" cy="304.4" r="1.7" fill="none" stroke="#a8a8a8" stroke-width="0.55"/>
    <path d="M927.5 306.0L932.1 302.4" stroke="#b0b0b0" stroke-width="0.6"/>
  </g>
  <circle cx="600.8" cy="298" r="1.3" fill="#e09a10"/>
  <path d="M792.5 300.5L798.5 295.5V300.5Z" fill="#e8b818"/>
  <!-- 3D viewport -->
  <rect x="589" y="307.2" width="199" height="0.9" fill="#5a5a5a"/>
  <rect x="589" y="308" width="199" height="226.3" fill="url(#brGrad)"/>
  <g clip-path="url(#clipBRfloor)">
    <rect x="589" y="453" width="160" height="82" fill="#7a797d"/>
    <path d="M589 453.2H760M589 457.4H760M589 461.8H760M589 466.3H760M589 471.0H760M589 475.9H760M589 481.1H760M589 486.4H760M589 491.9H760M589 497.6H760M589 503.6H760M589 509.8H760M589 516.3H760M589 523.0H760M589 530.0H760M544.5 453.2L532.9 534M549.1 453.2L538.4 534M553.7 453.2L544.0 534M558.3 453.2L549.6 534M562.9 453.2L555.1 534M567.5 453.2L560.7 534M572.1 453.2L566.2 534M576.7 453.2L571.8 534M581.3 453.2L577.4 534M585.9 453.2L582.9 534M590.5 453.2L588.5 534M595.1 453.2L594.1 534M599.7 453.2L599.6 534M604.3 453.2L605.2 534M608.9 453.2L610.8 534M613.5 453.2L616.3 534M618.1 453.2L621.9 534M622.7 453.2L627.5 534M627.3 453.2L633.0 534M631.9 453.2L638.6 534M636.5 453.2L644.2 534M641.1 453.2L649.7 534M645.7 453.2L655.3 534M650.3 453.2L660.9 534M654.9 453.2L666.4 534M659.5 453.2L672.0 534M664.1 453.2L677.5 534M668.7 453.2L683.1 534M673.3 453.2L688.7 534M677.9 453.2L694.2 534M682.5 453.2L699.8 534M687.1 453.2L705.4 534M691.7 453.2L710.9 534M696.3 453.2L716.5 534M700.9 453.2L722.1 534M705.5 453.2L727.6 534M710.1 453.2L733.2 534M714.7 453.2L738.8 534M719.3 453.2L744.3 534M723.9 453.2L749.9 534" stroke="#6b6a6e" stroke-width="0.5" fill="none"/>
  </g>
  <path d="M589 470.5H614L623 478H589Z" fill="#5d5c60"/>
  <path d="M677.8 473.3Q700 474 722 475.8L716 477.5Q695 478 682 476Z" fill="#606063"/>
  <!-- white panel -->
  <path d="M589 398.5H641.5L643 439H589Z" fill="#d6d6d8"/>
  <path d="M641.5 398.5L643 439" stroke="#b9a0a8" stroke-width="0.5"/>
  <!-- yellow selected panel -->
  <path d="M716 397.9L778 397.9L774 438L715 438.7Z" fill="#e8e1b0" stroke="#f0d840" stroke-width="1"/>
  <circle cx="745.8" cy="418" r="18.5" fill="none" stroke="#6c6c9a" stroke-width="0.6"/>
  <ellipse cx="745.8" cy="418" rx="18" ry="6" fill="none" stroke="#7ccc70" stroke-width="0.6"/>
  <path d="M745.8 399.5V436.5" stroke="#58b040" stroke-width="0.9"/>
  <path d="M727.5 418H764" stroke="#e06040" stroke-width="0.9"/>
  <rect x="746.5" y="407.5" width="8" height="9" fill="#c8d890" opacity="0.8"/>
  <rect x="746.5" y="416.5" width="8" height="4" fill="#e088c8" opacity="0.8"/>
  <circle cx="745.8" cy="399.5" r="1.1" fill="#58b040"/><circle cx="745.8" cy="436.5" r="1.1" fill="#58b040"/>
  <circle cx="727.5" cy="418" r="1.1" fill="#e03030"/><circle cx="764" cy="418" r="1.1" fill="#e03030"/>
  <circle cx="745.8" cy="413" r="1" fill="#3040c0"/><circle cx="745.8" cy="423" r="1" fill="#3040c0"/>
  <circle cx="763.5" cy="400.5" r="1.5" fill="none" stroke="#999" stroke-width="0.5"/>
  <path d="M744 390L747 393L745.5 393.3L746.5 395" stroke="#ddd" stroke-width="0.7" fill="none"/>
  <!-- left icon column -->
  <g fill="#bbb"><rect x="589.5" y="311" width="1.5" height="2"/><rect x="589.5" y="317" width="1.5" height="2"/><rect x="589.5" y="323" width="1.5" height="2"/><rect x="589.5" y="334" width="1.5" height="2"/><rect x="589.5" y="340" width="1.5" height="2"/><rect x="589.5" y="346" width="1.5" height="2"/></g>
  <rect x="589.2" y="329" width="1.8" height="3" fill="#2aa8f0"/>
  <!-- 2D window -->
  <rect x="788" y="307.2" width="1.3" height="227" fill="#111"/>
  <rect x="789.3" y="307.7" width="176" height="226.6" fill="url(#gridBR)"/>
  <rect x="789.3" y="445.1" width="176" height="0.6" fill="#b4b4b4"/>
  <rect x="791" y="362.5" width="49.3" height="34" fill="#fff" stroke="#bdbdbd" stroke-width="0.5"/>
  <rect x="842.5" y="357.4" width="112.5" height="44.2" fill="none" stroke="#a8a8a8" stroke-width="0.5"/>
  <rect x="847.2" y="362.5" width="50.3" height="34" fill="#fff" stroke="#f0e060" stroke-width="1"/>
  <rect x="900.4" y="362.5" width="50.3" height="34" fill="#fff" stroke="#f0e060" stroke-width="1"/>
  <path d="M847.5 380H950.5" stroke="#d8d8d8" stroke-width="0.5"/>
  <path d="M899 350.5V357.6" stroke="#999" stroke-width="0.5"/>
  <g fill="#8a8a8a"><circle cx="899" cy="350.5" r="0.8"/><circle cx="843.2" cy="357.6" r="0.7"/><circle cx="955" cy="357.6" r="0.7"/><circle cx="899" cy="357.6" r="0.7"/><circle cx="843.2" cy="380" r="0.7"/><circle cx="955" cy="380" r="0.7"/><circle cx="843.2" cy="400.6" r="0.7"/><circle cx="955" cy="400.6" r="0.7"/><circle cx="899" cy="400.6" r="0.7"/><circle cx="899" cy="380" r="0.8"/></g>
  <!-- right panel -->
  <rect x="965.3" y="287.2" width="1.2" height="247" fill="#151515"/>
  <rect x="966.5" y="287.2" width="60.8" height="247" fill="#252525"/>
  <rect x="966.5" y="287.2" width="60.8" height="6" fill="#1d1d1d"/>
  <path d="M968 289.5l1.5 2.5 1.5-2.5z" fill="#ccc"/>
  <text x="993" y="292.8" font-size="3.6" fill="#8a8a8a">Object Browser</text>
  <rect x="960" y="289.8" width="3.5" height="2.2" fill="#666"/>
  <g fill="#1a1a1a"><rect x="968" y="294.6" width="9" height="3.6"/><rect x="979.5" y="294.6" width="9" height="3.6" fill="#3a3a3a"/><rect x="991" y="294.6" width="9" height="3.6"/><rect x="1002" y="294.6" width="9" height="3.6"/><rect x="1012.5" y="294.6" width="9" height="3.6"/></g>
  <g fill="#888" opacity="0.5"><rect x="970" y="295.6" width="5" height="1.6"/><rect x="981.5" y="295.6" width="5" height="1.6" fill="#ccc"/><rect x="993" y="295.6" width="5" height="1.6"/><rect x="1004" y="295.6" width="5" height="1.6"/><rect x="1014.5" y="295.6" width="5" height="1.6"/></g>
  <rect x="1021.5" y="298.2" width="5.8" height="0.5" fill="#666"/>
  <rect x="999" y="302" width="11" height="5" fill="#2e2e2e"/><rect x="1011.5" y="302" width="12" height="5" fill="#2a2a2a"/>
  <rect x="1001" y="303.7" width="7" height="1.6" fill="#999" opacity="0.5"/>
  <path d="M972.5 315.5l1.2 1.3 2.3-2.8" stroke="#e0a81c" stroke-width="0.9" fill="none"/>
  <rect x="979" y="310.9" width="9.2" height="9.2" fill="#fafafa"/>
  <text x="990" y="316.6" font-size="3.4" fill="#d89a20">FABRIC 1</text>
  <!-- property editor -->
  <rect x="966.5" y="421.8" width="60.8" height="0.7" fill="#333"/>
  <rect x="966.5" y="422.5" width="60.8" height="5.3" fill="#1c1c1c"/>
  <circle cx="968.5" cy="425" r="0.6" fill="#bbb"/>
  <text x="994" y="426.3" font-size="3.4" fill="#8a8a8a">Property Editor</text>
  <g fill="#999" opacity="0.45">
    <rect x="974.5" y="430" width="4.5" height="1.6"/><text x="1009" y="431.8" font-size="3.2" fill="#aaa" clip-path="url(#clipBRpanel)">Pattern15_8019</text>
    <rect x="979" y="443.7" width="13" height="1.6"/><rect x="1008" y="443.7" width="12" height="1.6"/>
    <rect x="979" y="450.5" width="13" height="1.6"/><rect x="1008" y="450.5" width="12" height="1.6"/>
    <rect x="979" y="457.2" width="6" height="1.6"/><rect x="1012" y="457.2" width="4" height="1.6"/>
    <rect x="979" y="464" width="6" height="1.6"/><rect x="1012" y="464" width="4" height="1.6"/>
    <rect x="983" y="470.8" width="16" height="1.6"/><rect x="1012" y="470.8" width="4" height="1.6"/>
    <rect x="985" y="477.5" width="10" height="1.6"/><rect x="1008" y="477.5" width="4" height="1.6"/>
    <rect x="986" y="489.5" width="10" height="1.6"/><rect x="1012" y="489.5" width="4" height="1.6"/>
    <rect x="979" y="502.8" width="14" height="1.6"/><rect x="1008" y="502.8" width="6" height="1.6"/>
    <rect x="979" y="509.6" width="4" height="1.6"/><rect x="1008" y="509.6" width="2" height="1.6"/>
    <rect x="979" y="516.4" width="10" height="1.6"/><rect x="1008" y="516.4" width="6" height="1.6"/>
    <rect x="979" y="523.2" width="10" height="1.6"/><rect x="1008" y="523.2" width="6" height="1.6"/>
    <rect x="979" y="530" width="14" height="1.6"/><rect x="1008" y="530" width="3" height="1.6"/>
  </g>
  <g fill="#777"><rect x="1007.5" y="456.3" width="3" height="3"/><rect x="1007.5" y="463.1" width="3" height="3"/><rect x="1007.5" y="487.5" width="3" height="3"/></g>
  <path d="M1007.5 472l1 1.2 2-2.6" stroke="#e0a81c" stroke-width="0.8" fill="none"/>
  <path d="M1006 482H1027.3" stroke="#444" stroke-width="0.8"/>
  <path d="M971 436.5l1.5 2 1.5-2z" fill="#ccc"/>
  <rect x="974.5" y="436.7" width="13" height="2" fill="#d89a20" opacity="0.85"/>
  <path d="M971 495.7l1.5 2 1.5-2z" fill="#ccc"/>
  <rect x="974.5" y="495.9" width="11" height="2" fill="#d89a20" opacity="0.85"/>
  <path d="M977 470l1.2 1.6 1.2-1.6z" fill="#ccc"/>
  <g fill="#2c2c2c"><rect x="972" y="434.2" width="55" height="0.4"/><rect x="972" y="441" width="55" height="0.4"/><rect x="972" y="447.8" width="55" height="0.4"/><rect x="972" y="454.6" width="55" height="0.4"/><rect x="972" y="461.4" width="55" height="0.4"/><rect x="972" y="468.2" width="55" height="0.4"/><rect x="972" y="475" width="55" height="0.4"/><rect x="972" y="493" width="55" height="0.4"/><rect x="972" y="499.8" width="55" height="0.4"/><rect x="972" y="506.6" width="55" height="0.4"/><rect x="972" y="513.4" width="55" height="0.4"/><rect x="972" y="520.2" width="55" height="0.4"/><rect x="972" y="527" width="55" height="0.4"/></g>
</g>
<path d="M596.3 28h2.4v2.4h2.3l-3.5 3.6-3.5-3.6h2.3z" fill="#f0a010"/>
<path d="M17.3 304h2.4v2.4h2.3l-3.5 3.6-3.5-3.6h2.3z" fill="#f0a010"/>
<!-- labels -->
<text x="13.2" y="277.6" style='font-family:"Liberation Serif",serif' font-weight="bold" font-size="13" fill="#222">19</text>
<text x="591.4" y="277.3" font-weight="bold" font-size="11.4" fill="#222">20</text>
<path d="M0 0H1041V9H0ZM0 0H10V541H0ZM1030.8 0H1041V541H1030.8ZM0 534.9H1041V541H0Z" fill="#fff"/>

</svg>
</body></html>
